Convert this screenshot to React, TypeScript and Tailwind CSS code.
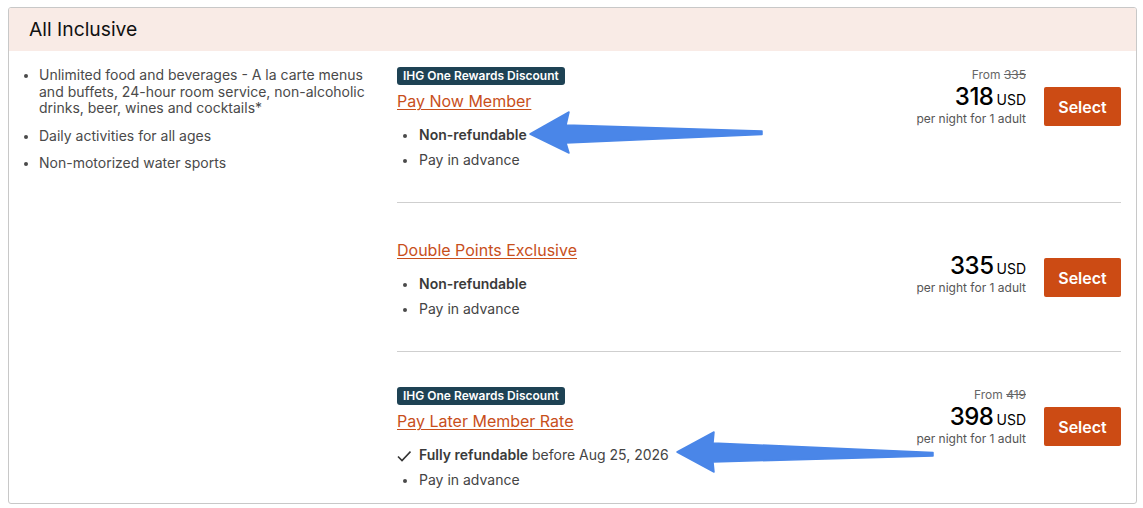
import React from "react";

type Rate = {
  badge?: string;
  title: string;
  refundable?: string;
  from?: string;
  price: string;
};

const rates: Rate[] = [
  { badge: "IHG One Rewards Discount", title: "Pay Now Member", from: "335", price: "318" },
  { title: "Double Points Exclusive", price: "335" },
  {
    badge: "IHG One Rewards Discount",
    title: "Pay Later Member Rate",
    refundable: "before Aug 25, 2026",
    from: "419",
    price: "398",
  },
];

const amenities = [
  "Unlimited food and beverages - A la carte menus and buffets, 24-hour room service, non-alcoholic drinks, beer, wines and cocktails*",
  "Daily activities for all ages",
  "Non-motorized water sports",
];

function Dot() {
  return <span className="mt-[9px] h-[4px] w-[4px] shrink-0 rounded-full bg-[#4a4a4a]" />;
}

function RateRow({ rate, index, last }: { rate: Rate; index: number; last: boolean }) {
  return (
    <div
      className={
        "flex justify-between " +
        (index === 0 ? "pt-[16px] " : "pt-[35px] ") +
        (last ? "pb-[11px]" : "border-b border-[#cfcfcf] pb-[32px]")
      }
    >
      <div className="flex flex-col">
        {rate.badge && (
          <div className="mb-[4px] flex h-[18px] w-fit items-center rounded-[3px] bg-[#1e4254] px-[6px] text-[12px] font-semibold leading-none text-white">
            {rate.badge}
          </div>
        )}
        <a className="text-[16px] leading-[24px] text-[#c84f1b] underline decoration-1 underline-offset-[2px]">
          {rate.title}
        </a>
        <ul className="mt-[12px] flex flex-col gap-[5px] text-[14px] leading-[20px] text-[#444]">
          {rate.refundable ? (
            <li className="flex items-start">
              <svg width="14" height="14" viewBox="0 0 14 14" className="mr-[8px] mt-[4px]">
                <path d="M1 7.5 L5 11.5 L13.5 2.5" fill="none" stroke="#333" strokeWidth="1.6" />
              </svg>
              <span>
                <b className="font-semibold text-[#3a3a3a]">Fully refundable</b> {rate.refundable}
              </span>
            </li>
          ) : (
            <li className="flex items-start gap-[12px] pl-[6px]">
              <Dot />
              <span className="font-semibold text-[#3a3a3a]">Non-refundable</span>
            </li>
          )}
          <li className="flex items-start gap-[12px] pl-[6px]">
            <Dot />
            <span>Pay in advance</span>
          </li>
        </ul>
      </div>
      <div className="flex gap-[18px] self-start">
        <div className="flex flex-col items-end self-end">
          {rate.from && (
            <div className="h-[16px] text-[12px] leading-[16px] text-[#666]">
              From <span className="line-through">{rate.from}</span>
            </div>
          )}
          <div className="flex h-[28px] items-baseline gap-[3px] leading-[28px] text-black">
            <span className="text-[24px] font-medium tracking-[-0.5px]">{rate.price}</span>
            <span className="text-[14px]">USD</span>
          </div>
          <div className="mb-[1px] h-[16px] text-[12px] leading-[16px] text-[#555]">per night for 1 adult</div>
        </div>
        <button className="mt-[20px] h-[39px] w-[77px] self-start rounded-[2px] bg-[#cc4b14] text-[16px] font-semibold text-white">
          Select
        </button>
      </div>
    </div>
  );
}

export default function App() {
  return (
    <div className="relative h-[508px] w-[1143px] bg-white p-[8px] pt-[7px] font-['Inter','Liberation_Sans',sans-serif]">
      <div className="flex h-[497px] w-[1129px] flex-col overflow-hidden rounded-[3px] border border-[#c8c8c8]">
        <div className="flex h-[43px] shrink-0 items-center bg-[#f9ebe6] px-[20px] pb-[1px] text-[19.3px] text-[#111]">
          All Inclusive
        </div>
        <div className="flex flex-1">
          <ul className="flex w-[388px] shrink-0 flex-col gap-[11px] pl-[15px] pr-[10px] pt-[16px] text-[14px] leading-[16.5px] text-[#4a4a4a]">
            {amenities.map((a) => (
              <li key={a} className="flex items-start gap-[11px]">
                <span className="mt-[7px] h-[4px] w-[4px] shrink-0 rounded-full bg-[#4a4a4a]" />
                <span className="w-[330px]">{a}</span>
              </li>
            ))}
          </ul>
          <div className="flex flex-1 flex-col pr-[15px]">
            {rates.map((r, i) => (
              <RateRow key={r.title} rate={r} index={i} last={i === rates.length - 1} />
            ))}
          </div>
        </div>
      </div>
      {/* annotation arrows */}
      <svg
        className="pointer-events-none absolute left-0 top-0"
        width="1143"
        height="508"
        viewBox="0 0 1143 508"
      >
        <path
          d="M530 134 L569 112 L566 125 L762 131 L762 134.5 L566 143 L569 153 Z"
          fill="#4a86e8"
          stroke="#4a86e8"
          strokeWidth="1.5"
          strokeLinejoin="round"
        />
        <path
          d="M677 452 L714 432 L713 443 L933 452.5 L933 456 L713 462 L714 472 Z"
          fill="#4a86e8"
          stroke="#4a86e8"
          strokeWidth="1.5"
          strokeLinejoin="round"
        />
      </svg>
    </div>
  );
}
